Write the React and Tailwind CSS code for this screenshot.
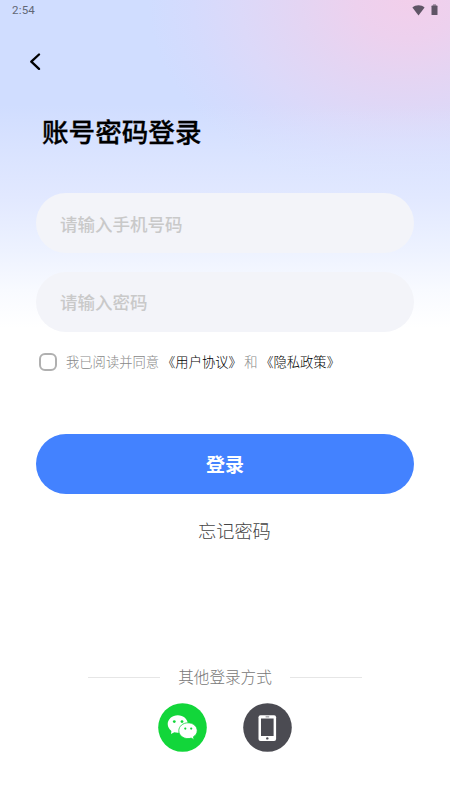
import { useState } from "react";

const FONT = "font-['Roboto','Noto_Sans_CJK_SC',sans-serif]";

function StatusBar() {
  return (
    <div className="flex h-5 items-center justify-between pr-[12px] pl-[12px] text-[#5f5566]">
      <span className="text-[11.5px] leading-5 tracking-[0.2px] text-[#626876]">2:54</span>
      <div className="flex items-center gap-[6px]">
        <svg width="13" height="11" viewBox="0 0 13 11" fill="currentColor">
          <path d="M6.5 10.4 0.4 2.6C2.1 0.9 4.1 0.2 6.5 0.2s4.4 0.7 6.1 2.4z" />
        </svg>
        <svg width="7" height="12" viewBox="0 0 7 12" fill="currentColor">
          <rect x="2" y="0" width="3" height="2" opacity="0.45" />
          <rect x="0.5" y="1.6" width="6" height="9.4" rx="0.6" />
        </svg>
      </div>
    </div>
  );
}

function WechatIcon() {
  return (
    <svg width="49" height="49" viewBox="0 0 49 49">
      <circle cx="24.5" cy="24.5" r="24.3" fill="#12d63a" />
      <path
        d="M19.8 12.2c-5.6 0-10.1 3.9-10.1 8.9 0 2.8 1.4 5.2 3.7 6.8l-.4 3 3.3-1.7c1.1.3 2.3.5 3.5.5 5.6 0 10.1-3.9 10.1-8.6 0-5-4.5-8.9-10.1-8.9z"
        fill="#fff"
      />
      <path
        d="M30 19.8c-5.1 0-9.2 3.5-9.2 7.9s4.1 7.9 9.2 7.9c1.1 0 2.2-.2 3.2-.5l2.9 1.6-.7-2.9c2.3-1.4 3.8-3.6 3.8-6.1 0-4.4-4.1-7.9-9.2-7.9z"
        fill="#fff"
        stroke="#12d63a"
        strokeWidth="0.8"
      />
      <g fill="#12d63a">
        <circle cx="16.3" cy="18.6" r="1.4" />
        <circle cx="24" cy="18.6" r="1.4" />
        <circle cx="27.3" cy="25.6" r="1.1" />
        <circle cx="33.2" cy="25.6" r="1.1" />
      </g>
    </svg>
  );
}

function PhoneIcon() {
  return (
    <svg width="49" height="49" viewBox="0 0 49 49">
      <circle cx="24.5" cy="24.5" r="24.3" fill="#4b4b52" />
      <rect x="15.5" y="12.2" width="17.6" height="25.8" rx="2" fill="#fff" />
      <rect x="18" y="15.5" width="12.6" height="17.5" fill="#4b4b52" />
      <rect x="22.6" y="13.3" width="3.6" height="1.1" fill="#8d8d93" />
      <circle cx="24.3" cy="35.4" r="1.2" fill="#4b4b52" />
    </svg>
  );
}

const inputClass =
  "h-[60px] w-full rounded-full bg-[#f3f4f9] px-6 pt-[3px] text-[17.5px] font-medium text-black outline-none placeholder:text-[#c9c9c9]";

export default function App() {
  const [phone, setPhone] = useState("");
  const [password, setPassword] = useState("");
  const [agreed, setAgreed] = useState(false);

  return (
    <div
      lang="zh-CN"
      className={`flex h-[800px] w-[450px] flex-col overflow-hidden bg-[linear-gradient(to_bottom,rgba(225,232,255,0)_105px,rgba(225,232,255,0.65)_160px,#e1e8ff_195px,#edf2ff_250px,#f8faff_290px,#ffffff_328px),radial-gradient(ellipse_260px_195px_at_408px_0px,#f2cfeb_0%,#edd1ee_20%,#e4d5f3_42%,#dcd9f9_65%,#d5dbfd_83%,rgba(208,221,255,0)_100%),linear-gradient(#d0ddff,#d0ddff)] ${FONT}`}
    >
      <StatusBar />

      <header className="flex h-[83px] items-center pl-[29px]">
        <button type="button" aria-label="返回">
          <svg width="12" height="18" viewBox="0 0 12 18" fill="none" stroke="#000" strokeWidth="2.3" strokeLinecap="round" strokeLinejoin="round">
            <path d="M10 1.5 2.3 8.7l7.7 7.2" />
          </svg>
        </button>
      </header>

      <h1 className="ml-[42px] h-[90px] pt-[10px] text-[26.6px] leading-[40px] font-medium text-black [-webkit-text-stroke:0.3px]">
        账号密码登录
      </h1>

      <form className="flex flex-col px-9" onSubmit={(e) => e.preventDefault()}>
        <div className="flex flex-col gap-[18.5px]">
          <input className={inputClass} placeholder="请输入手机号码" value={phone} onChange={(e) => setPhone(e.target.value)} />
          <input type="password" className={inputClass} placeholder="请输入密码" value={password} onChange={(e) => setPassword(e.target.value)} />
        </div>

        <div className="mt-5 ml-[3px] flex h-5 items-center text-[13.3px] font-light whitespace-nowrap text-[#888888]">
          <button
            type="button"
            aria-pressed={agreed}
            onClick={() => setAgreed(!agreed)}
            className={`mr-[9px] size-[18px] shrink-0 rounded-[6px] border-2 border-[#b0b0b0] ${agreed ? "bg-[#4382ff]" : "bg-white"}`}
          />
          <span className="pt-[2px]">我已阅读并同意</span>
          <span className="ml-[3px] pt-[2px] text-black">《用户协议》</span>
          <span className="ml-[2.5px] pt-[2px]">和</span>
          <span className="ml-[2.5px] pt-[2px] text-black">《隐私政策》</span>
        </div>

        <button type="submit" className="mt-[62.5px] h-[60px] rounded-full bg-[#4382ff] pt-[5px] text-[19px] font-bold text-white">
          登录
        </button>
      </form>

      <button type="button" className="mt-[23px] ml-[198px] self-start text-[18.2px] leading-[30px] font-light text-[#444444]">
        忘记密码
      </button>

      <footer className="mt-auto flex flex-col items-center pb-12">
        <div className="flex items-center gap-[18px] text-[15.6px] leading-6 font-light text-[#777777]">
          <span className="h-px w-[72px] bg-[#e6e6e6]" />
          <span className="pt-[1px]">其他登录方式</span>
          <span className="h-px w-[72px] bg-[#e6e6e6]" />
        </div>
        <div className="mt-[13px] flex gap-9">
          <button type="button" aria-label="微信登录">
            <WechatIcon />
          </button>
          <button type="button" aria-label="手机登录">
            <PhoneIcon />
          </button>
        </div>
      </footer>
    </div>
  );
}
